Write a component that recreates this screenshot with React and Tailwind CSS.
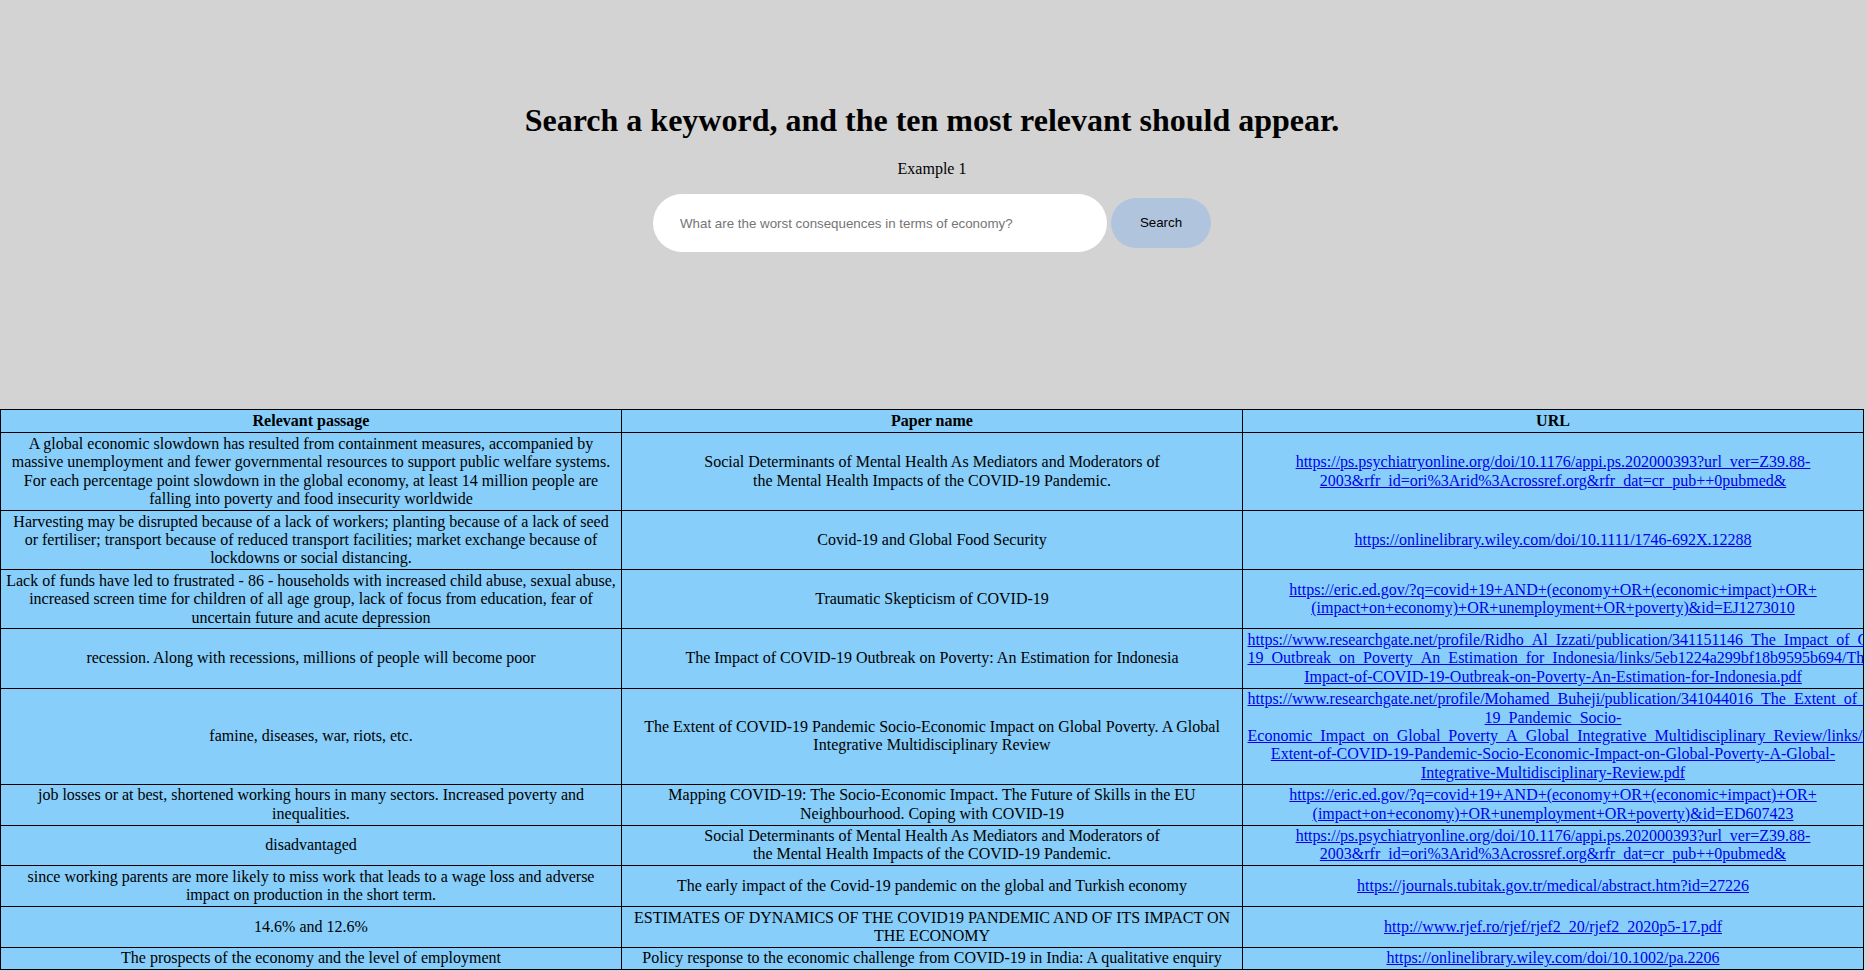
import React, { useState } from "react";

const rows = [
  {
    passage:
      "A global economic slowdown has resulted from containment measures, accompanied by massive unemployment and fewer governmental resources to support public welfare systems. For each percentage point slowdown in the global economy, at least 14 million people are falling into poverty and food insecurity worldwide",
    paper: ["Social Determinants of Mental Health As Mediators and Moderators of", "the Mental Health Impacts of the COVID-19 Pandemic."],
    url: "https://ps.psychiatryonline.org/doi/10.1176/appi.ps.202000393?url_ver=Z39.88-2003&rfr_id=ori%3Arid%3Acrossref.org&rfr_dat=cr_pub++0pubmed&",
  },
  {
    passage:
      "Harvesting may be disrupted because of a lack of workers; planting because of a lack of seed or fertiliser; transport because of reduced transport facilities; market exchange because of lockdowns or social distancing.",
    paper: ["Covid-19 and Global Food Security"],
    url: "https://onlinelibrary.wiley.com/doi/10.1111/1746-692X.12288",
  },
  {
    passage:
      "Lack of funds have led to frustrated - 86 - households with increased child abuse, sexual abuse, increased screen time for children of all age group, lack of focus from education, fear of uncertain future and acute depression",
    paper: ["Traumatic Skepticism of COVID-19"],
    url: "https://eric.ed.gov/?q=covid+19+AND+(economy+OR+(economic+impact)+OR+(impact+on+economy)+OR+unemployment+OR+poverty)&id=EJ1273010",
  },
  {
    passage: "recession. Along with recessions, millions of people will become poor",
    paper: ["The Impact of COVID-19 Outbreak on Poverty: An Estimation for Indonesia"],
    url: "https://www.researchgate.net/profile/Ridho_Al_Izzati/publication/341151146_The_Impact_of_COVID-19_Outbreak_on_Poverty_An_Estimation_for_Indonesia/links/5eb1224a299bf18b9595b694/The-Impact-of-COVID-19-Outbreak-on-Poverty-An-Estimation-for-Indonesia.pdf",
  },
  {
    passage: "famine, diseases, war, riots, etc.",
    paper: ["The Extent of COVID-19 Pandemic Socio-Economic Impact on Global Poverty. A Global Integrative Multidisciplinary Review"],
    url: "https://www.researchgate.net/profile/Mohamed_Buheji/publication/341044016_The_Extent_of_COVID-19_Pandemic_Socio-Economic_Impact_on_Global_Poverty_A_Global_Integrative_Multidisciplinary_Review/links/5eaa5ee5a6fdcc70509a1f38/The-Extent-of-COVID-19-Pandemic-Socio-Economic-Impact-on-Global-Poverty-A-Global-Integrative-Multidisciplinary-Review.pdf",
  },
  {
    passage:
      "job losses or at best, shortened working hours in many sectors. Increased poverty and inequalities.",
    paper: ["Mapping COVID-19: The Socio-Economic Impact. The Future of Skills in the EU Neighbourhood. Coping with COVID-19"],
    url: "https://eric.ed.gov/?q=covid+19+AND+(economy+OR+(economic+impact)+OR+(impact+on+economy)+OR+unemployment+OR+poverty)&id=ED607423",
  },
  {
    passage: "disadvantaged",
    paper: ["Social Determinants of Mental Health As Mediators and Moderators of", "the Mental Health Impacts of the COVID-19 Pandemic."],
    url: "https://ps.psychiatryonline.org/doi/10.1176/appi.ps.202000393?url_ver=Z39.88-2003&rfr_id=ori%3Arid%3Acrossref.org&rfr_dat=cr_pub++0pubmed&",
  },
  {
    passage:
      "since working parents are more likely to miss work that leads to a wage loss and adverse impact on production in the short term.",
    paper: ["The early impact of the Covid-19 pandemic on the global and Turkish economy"],
    url: "https://journals.tubitak.gov.tr/medical/abstract.htm?id=27226",
  },
  {
    passage: "14.6% and 12.6%",
    paper: ["ESTIMATES OF DYNAMICS OF THE COVID19 PANDEMIC AND OF ITS IMPACT ON THE ECONOMY"],
    url: "http://www.rjef.ro/rjef/rjef2_20/rjef2_2020p5-17.pdf",
  },
  {
    passage: "The prospects of the economy and the level of employment",
    paper: ["Policy response to the economic challenge from COVID-19 in India: A qualitative enquiry"],
    url: "https://onlinelibrary.wiley.com/doi/10.1002/pa.2206",
  },
];

export default function App() {
  const [query, setQuery] = useState("");

  return (
    <div className="min-h-screen w-full overflow-hidden bg-[#d3d3d3] font-['Liberation_Serif',serif] text-black">
      <div className="w-[1864px] overflow-hidden">
        {/* Search header */}
        <div className="flex h-[409px] flex-col items-center pt-[102px]">
          <h1 className="text-[32px] font-bold leading-[37px]">
            Search a keyword, and the ten most relevant should appear.
          </h1>
          <p className="mt-[21px] text-base leading-[18px]">Example 1</p>
          <form className="mt-[16px] flex items-center" onSubmit={(e) => e.preventDefault()}>
            <input
              value={query}
              onChange={(e) => setQuery(e.target.value)}
              placeholder="What are the worst consequences in terms of economy?"
              className="h-[58px] w-[454px] rounded-full bg-white pl-[27px] pr-4 font-['Liberation_Sans',Arial,sans-serif] text-[13.33px] text-black outline-none placeholder:text-[#757575]"
            />
            <button
              type="submit"
              className="ml-[4px] h-[50px] w-[100px] rounded-full bg-[#b0c4de] font-['Liberation_Sans',Arial,sans-serif] text-[13.33px] text-black"
            >
              Search
            </button>
          </form>
        </div>

        {/* Results */}
        <table className="w-[1864px] table-fixed border-collapse border border-black bg-[#87cefa] text-base leading-[18.4px]">
          <thead>
            <tr>
              <th className="border border-black px-[4.5px] py-[2px] text-center font-bold">Relevant passage</th>
              <th className="border border-black px-[4.5px] py-[2px] text-center font-bold">Paper name</th>
              <th className="border border-black px-[4.5px] py-[2px] text-center font-bold">URL</th>
            </tr>
          </thead>
          <tbody>
            {rows.map((row, i) => (
              <tr key={i}>
                <td className="border border-black px-[4.5px] py-[1.5px] text-center align-middle">{row.passage}</td>
                <td className="border border-black px-[4.5px] py-[1.5px] text-center align-middle">
                  {row.paper.map((line, j) => (
                    <React.Fragment key={j}>
                      {j > 0 && <br />}
                      {line}
                    </React.Fragment>
                  ))}
                </td>
                <td className="border border-black px-[4.5px] py-[1.5px] text-center align-middle">
                  <a href={row.url} className="text-[#0000ee] underline">
                    {row.url}
                  </a>
                </td>
              </tr>
            ))}
          </tbody>
        </table>
      </div>
    </div>
  );
}
